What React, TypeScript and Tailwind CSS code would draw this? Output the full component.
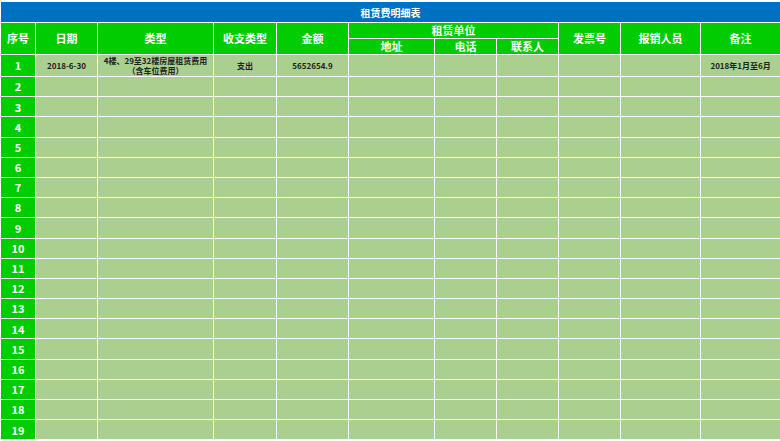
import React from 'react';

const cols = [35, 62, 116, 63, 72, 86, 62, 62, 62, 80, 80];
const rows = Array.from({ length: 18 }, (_, i) => i + 2);

const th = 'border border-white bg-[#00cc00] text-white font-bold text-[11px] p-0 text-center align-middle';
const td = 'border border-white bg-[#a9d08e] p-0 text-center align-middle text-[8px] font-bold text-[#222]';

export default function App() {
  return (
    <div className="w-[780px] h-[441px] overflow-hidden bg-white pt-px" style={{ fontFamily: '"Noto Sans CJK SC", "Liberation Sans", sans-serif' }}>
      <table className="border-collapse table-fixed w-[780px]">
        <colgroup>
          {cols.map((w, i) => <col key={i} style={{ width: w }} />)}
        </colgroup>
        <tbody>
          <tr className="h-[21px]">
            <td colSpan={11} className="border border-white bg-[#0070c0] text-white font-bold text-[10px] text-center p-0">租赁费明细表</td>
          </tr>
          <tr className="h-[16px]">
            <td rowSpan={2} className={th + ' text-[10px]'}>序号</td>
            <td rowSpan={2} className={th + ' text-[10px]'}>日期</td>
            <td rowSpan={2} className={th + ' text-[10px]'}>类型</td>
            <td rowSpan={2} className={th + ' text-[10px]'}>收支类型</td>
            <td rowSpan={2} className={th + ' text-[10px]'}>金额</td>
            <td colSpan={3} className={th + ' leading-none'}>租赁单位</td>
            <td rowSpan={2} className={th}>发票号</td>
            <td rowSpan={2} className={th}>报销人员</td>
            <td rowSpan={2} className={th}>备注</td>
          </tr>
          <tr className="h-[16px]">
            <td className={th + ' leading-none'}>地址</td>
            <td className={th + ' leading-none'}>电话</td>
            <td className={th + ' leading-none'}>联系人</td>
          </tr>
          <tr className="h-[22px]">
            <td className={th + ' text-[9px]'}>1</td>
            <td className={td}>2018-6-30</td>
            <td className={td + ' leading-[10px]'}>4楼、29至32楼房屋租赁费用<br />（含车位费用）</td>
            <td className={td}>支出</td>
            <td className={td}>5652654.9</td>
            <td className={td}></td>
            <td className={td}></td>
            <td className={td}></td>
            <td className={td}></td>
            <td className={td}></td>
            <td className={td}>2018年1月至6月</td>
          </tr>
          {rows.map((n) => (
            <tr key={n} className="h-[20.2px]">
              <td className={th + ' text-[9px]'}>{n}</td>
              {Array.from({ length: 10 }, (_, i) => <td key={i} className={td}></td>)}
            </tr>
          ))}
        </tbody>
      </table>
    </div>
  );
}
